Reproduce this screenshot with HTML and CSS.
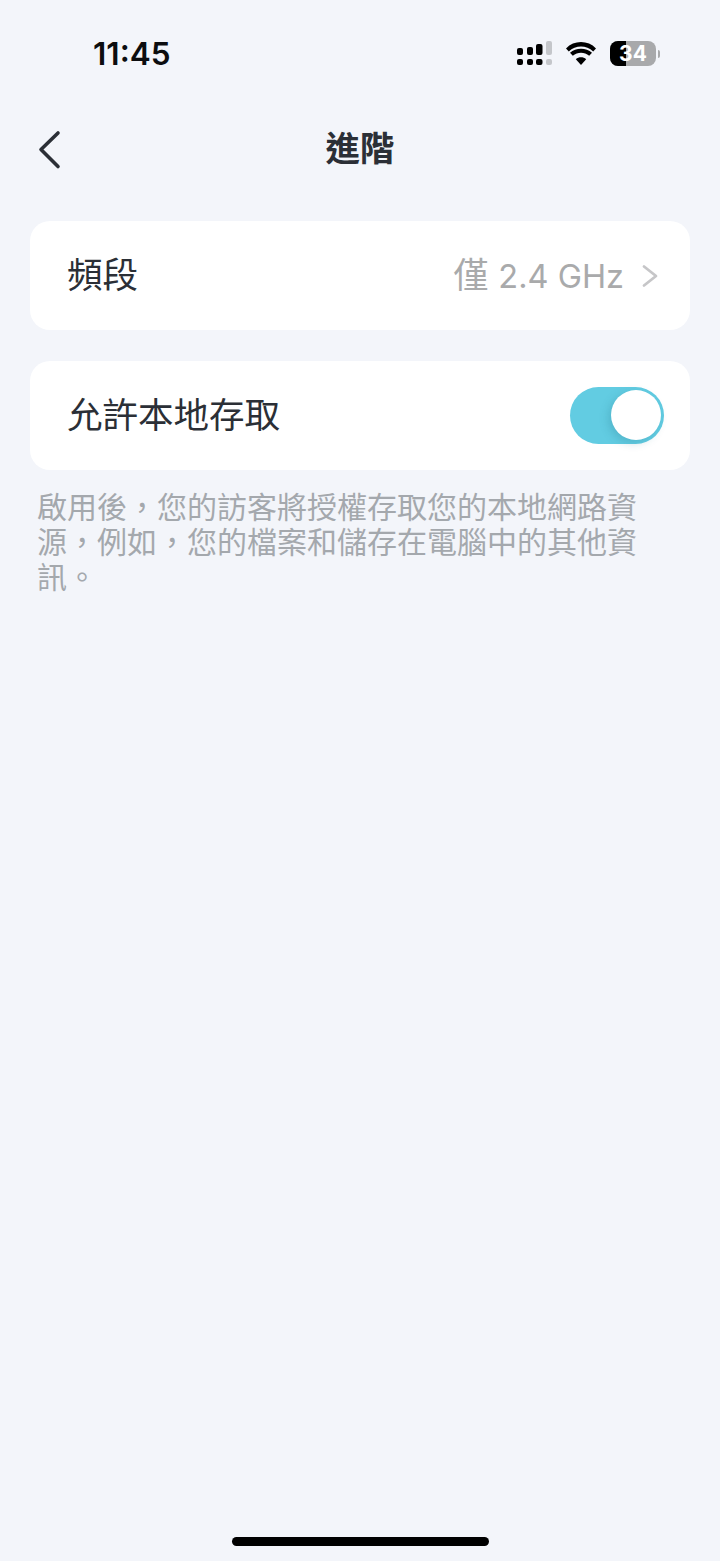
FILE: index.html
```html
<!DOCTYPE html>
<html lang="zh-TW">

<head>
    <meta charset="UTF-8">
    <meta name="viewport" content="width=device-width, initial-scale=1.0">
    <title>進階</title>
    <link rel="stylesheet" href="styles.css">
</head>

<body>
    <div class="page">
        <div class="status-bar">
            <div class="time">11:45</div>
            <div class="status-icons">
                <svg class="signal" width="36" height="25" viewBox="0 0 36 25">
                    <rect x="1" y="7" width="6" height="7" rx="2" fill="#000" />
                    <rect x="11" y="6" width="6" height="8" rx="2" fill="#000" />
                    <rect x="20" y="3" width="6.5" height="11" rx="2" fill="#000" />
                    <rect x="30" y="0" width="6" height="14" rx="2" fill="#c4c6ca" />
                    <rect x="1" y="18" width="6" height="6" rx="2" fill="#000" />
                    <rect x="11" y="18" width="6" height="6" rx="2" fill="#000" />
                    <rect x="20" y="18" width="6.5" height="6" rx="2" fill="#000" />
                    <rect x="30" y="18" width="6" height="6" rx="2" fill="#c4c6ca" />
                </svg>
                <svg class="wifi" width="30" height="23" viewBox="0 0 30 23">
                    <path d="M15 23 L9.8 17.2 C12.8 14.6 17.2 14.6 20.2 17.2 Z" fill="#000" />
                    <path d="M6.8 13.8 L4 10.8 C9.8 5.4 20.2 5.4 26 10.8 L23.2 13.8 C18.4 9.8 11.6 9.8 6.8 13.8 Z" fill="#000" />
                    <path d="M2.8 9.4 L0 6.4 C8 -2 22 -2 30 6.4 L27.2 9.4 C20.4 3 9.6 3 2.8 9.4 Z" fill="#000" />
                </svg>
                <div class="battery">
                    <div class="battery-body">
                        <div class="battery-fill"></div>
                        <span class="battery-num">34</span>
                    </div>
                    <div class="battery-tip"></div>
                </div>
            </div>
        </div>

        <div class="nav">
            <svg class="back" width="24" height="40" viewBox="0 0 24 40">
                <path d="M20 3 L3 19.5 L20 36.5" fill="none" stroke="#2b2f36" stroke-width="3.6" stroke-linecap="round" stroke-linejoin="round" />
            </svg>
            <div class="nav-title">進階</div>
        </div>

        <div class="card">
            <div class="card-label">頻段</div>
            <div class="card-right">
                <span class="card-value">僅 <span class="card-value-num">2.4 GHz</span></span>
                <svg class="arrow" width="17" height="24" viewBox="0 0 17 24">
                    <path d="M3 2.5 L15 12 L3 21.5" fill="none" stroke="#c6c6c8" stroke-width="2.8" stroke-linecap="round" stroke-linejoin="round" />
                </svg>
            </div>
        </div>

        <div class="card card-switch">
            <div class="card-label">允許本地存取</div>
            <div class="toggle">
                <div class="toggle-knob"></div>
            </div>
        </div>

        <div class="note">啟用後，您的訪客將授權存取您的本地網路資源，例如，您的檔案和儲存在電腦中的其他資訊。</div>

        <div class="home-bar"></div>
    </div>
</body>

</html>
```

FILE: styles.css
```css
* {
    box-sizing: border-box;
}

html,
body {
    margin: 0;
    padding: 0;
}

body {
    background: #f3f5fa;
    font-family: Inter, "Noto Sans CJK TC", sans-serif;
    color: #2b2f36;
}

.page {
    height: 1561px;
    display: flex;
    flex-direction: column;
    overflow: hidden;
}

.status-bar {
    height: 100px;
    padding: 35px 60px 0 93px;
    display: flex;
    justify-content: space-between;
    align-items: flex-start;
}

.time {
    font-size: 31.5px;
    line-height: 38px;
    font-weight: 600;
    color: #0c0d0f;
}

.status-icons {
    display: flex;
    align-items: center;
    margin-top: 6px;
}

.wifi {
    margin-left: 14px;
}

.battery {
    margin-left: 14px;
    display: flex;
    align-items: center;
}

.battery-body {
    position: relative;
    width: 46px;
    height: 25px;
    border-radius: 8px;
    background: #a8a9ab;
    overflow: hidden;
    display: flex;
    justify-content: center;
    align-items: center;
}

.battery-fill {
    position: absolute;
    left: 0;
    top: 0;
    bottom: 0;
    width: 16px;
    background: #000;
}

.battery-num {
    position: relative;
    font-size: 21px;
    line-height: 25px;
    font-weight: 700;
    color: #fff;
}

.battery-tip {
    width: 2px;
    height: 8px;
    margin-left: 2px;
    border-radius: 0 3px 3px 0;
    background: #a8a9ab;
}

.nav {
    position: relative;
    height: 98px;
    display: flex;
    justify-content: center;
    align-items: center;
}

.back {
    position: absolute;
    left: 38px;
    top: 30px;
}

.nav-title {
    font-size: 34.5px;
    line-height: 98px;
    font-weight: 700;
}

.card {
    height: 109px;
    margin: 23px 30px 0;
    padding: 0 32px 0 37px;
    background: #fff;
    border-radius: 20px;
    display: flex;
    justify-content: space-between;
    align-items: center;
}

.card-switch {
    margin-top: 31px;
    padding-right: 26px;
}

.card-label {
    font-size: 35.5px;
    line-height: 44px;
}

.card-right {
    display: flex;
    align-items: center;
}

.card-value {
    font-size: 35px;
    line-height: 44px;
    color: #a9aaab;
}

.card-value-num {
    font-size: 32.5px;
}

.arrow {
    margin-left: 17px;
}

.toggle {
    width: 94px;
    height: 57px;
    padding: 3px;
    border-radius: 29px;
    background: #62cce2;
    display: flex;
    justify-content: flex-end;
}

.toggle-knob {
    width: 50px;
    height: 50px;
    border-radius: 50%;
    background: #fff;
    box-shadow: -3px 3px 8px rgba(40, 120, 140, 0.25);
}

.note {
    margin: 20px 60px 0 37px;
    font-size: 30px;
    line-height: 35px;
    color: #a4a8ad;
}

.home-bar {
    width: 257px;
    height: 9px;
    margin: auto auto 15px;
    border-radius: 5px;
    background: #000;
}
```
